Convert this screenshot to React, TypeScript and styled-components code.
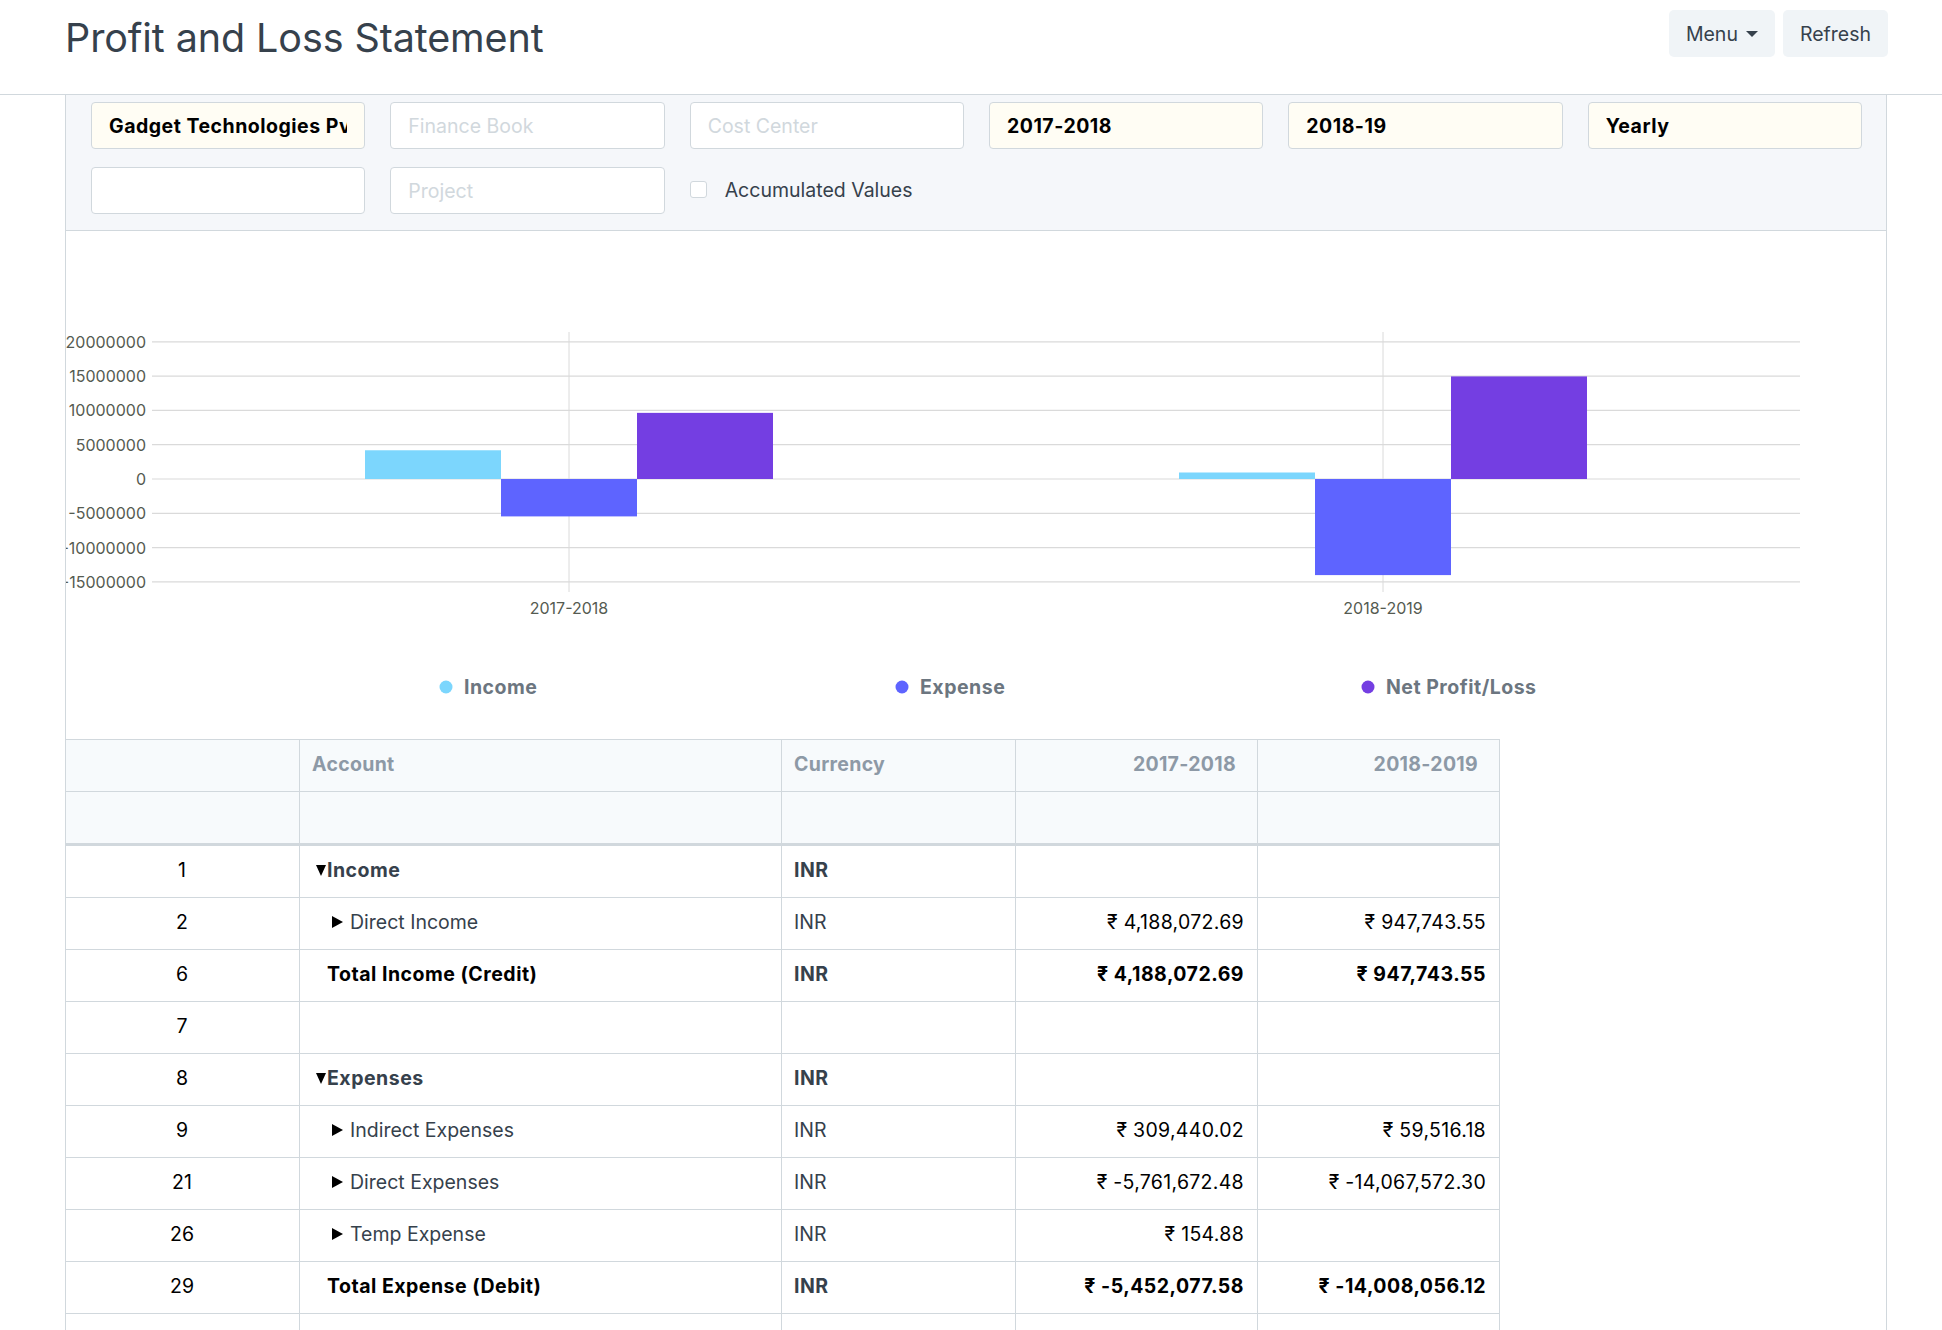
import React from 'react';
import styled, { createGlobalStyle } from 'styled-components';

const GlobalStyle = createGlobalStyle`
  * { box-sizing: border-box; }
  body {
    margin: 0;
    background: #fff;
    font-family: Inter, "Noto Sans", "DejaVu Sans", sans-serif;
    color: #36414c;
    font-size: 19.5px;
  }
`

const Header = styled.header`
  display: flex;
  justify-content: space-between;
  align-items: flex-start;
  height: 95px;
  padding: 0 54px 0 65px;
  border-bottom: 1px solid #d1d8dd;
`
const Title = styled.h1`
  margin: 15px 0 0;
  font-size: 39.5px;
  line-height: 47px;
  font-weight: 400;
  color: #36414c;
  letter-spacing: -0.1px;
`
const Actions = styled.div`
  display: flex;
  gap: 8px;
  margin-top: 10px;
`
const Button = styled.button`
  display: flex;
  align-items: center;
  height: 47px;
  padding: 0 17px;
  background: #f0f4f7;
  border: none;
  border-radius: 5px;
  font-family: inherit;
  font-size: 19.5px;
  color: #36414c;
`
const Caret = styled.span`
  margin-left: 8px;
  width: 0;
  height: 0;
  border-left: 6.5px solid transparent;
  border-right: 6.5px solid transparent;
  border-top: 6px solid #36414c;
`

const Page = styled.main`
  margin-left: 65px;
  width: 1822px;
  border-left: 1px solid #d1d8dd;
  border-right: 1px solid #d1d8dd;
`
const Filters = styled.section`
  display: grid;
  grid-template-columns: repeat(6, 1fr);
  column-gap: 25px;
  row-gap: 18px;
  padding: 7px 24px 16px 25px;
  background: #f5f7fa;
  border-bottom: 1px solid #d1d8dd;
`
const Field = styled.input<{ $filled?: boolean }>`
  height: 47px;
  width: 100%;
  padding: 0 17px;
  border: 1px solid #d1d8dd;
  border-radius: 4px;
  background: ${p => (p.$filled ? '#fffdf4' : '#fff')};
  font-family: inherit;
  font-size: 19.5px;
  font-weight: 700;
  letter-spacing: 0.5px;
  color: #000;
  outline: none;
  &::placeholder {
    color: #d1d8dd;
    font-weight: 400;
    letter-spacing: 0;
  }
`
const CheckRow = styled.label`
  display: flex;
  align-items: center;
  gap: 18px;
  padding-bottom: 2px;
  white-space: nowrap;
  color: #36414c;
`
const CheckBox = styled.span`
  width: 17px;
  height: 17px;
  border: 1px solid #d1d8dd;
  border-radius: 3px;
  background: #fff;
`

const ChartBox = styled.section`
  height: 508px;
  svg { display: block; }
`

const Table = styled.div`
  width: 1434px;
  border-top: 1px solid #d1d8dd;
`
const Row = styled.div<{ $head?: boolean; $split?: boolean }>`
  display: grid;
  grid-template-columns: 234px 482px 234px 242px 242px;
  height: ${p => (p.$split ? 54 : 52)}px;
  background: ${p => (p.$head ? '#f7fafc' : '#fff')};
  border-bottom: ${p => (p.$split ? 3 : 1)}px solid #d1d8dd;
`
const Cell = styled.div<{ $align?: 'left' | 'center' | 'right'; $bold?: boolean; $tone?: string; $num?: boolean }>`
  display: flex;
  align-items: center;
  justify-content: ${p => (p.$align === 'right' ? 'flex-end' : p.$align === 'center' ? 'center' : 'flex-start')};
  padding: 0 13px 3px 12px;
  border-right: 1px solid #d1d8dd;
  font-weight: ${p => (p.$bold ? 700 : 400)};
  letter-spacing: ${p => (p.$bold ? 0.5 : p.$num ? 0.3 : 0)}px;
  color: ${p => p.$tone || '#36414c'};
  white-space: nowrap;
  overflow: hidden;
`
const HeadCell = styled(Cell)`
  font-weight: 700;
  color: #8d99a6;
  padding-right: 21px;
  letter-spacing: 0.3px;
`
const Toggle = styled.span<{ $open?: boolean }>`
  display: inline-block;
  width: 0;
  height: 0;
  ${p =>
    p.$open
      ? `margin: 0 1px 0 4px;
         border-left: 5px solid transparent;
         border-right: 5px solid transparent;
         border-top: 11px solid #000;`
      : `margin: 0 7px 0 20px;
         border-top: 6.5px solid transparent;
         border-bottom: 6.5px solid transparent;
         border-left: 11px solid #000;`}
`
const Indent = styled.span`
  padding-left: 15px;
`

type Kind = 'group' | 'child' | 'total' | 'blank'
interface Line {
  idx: number
  account?: string
  kind: Kind
  a?: string
  b?: string
}

const lines: Line[] = [
  { idx: 1, account: 'Income', kind: 'group' },
  { idx: 2, account: 'Direct Income', kind: 'child', a: '₹ 4,188,072.69', b: '₹ 947,743.55' },
  { idx: 6, account: 'Total Income (Credit)', kind: 'total', a: '₹ 4,188,072.69', b: '₹ 947,743.55' },
  { idx: 7, kind: 'blank' },
  { idx: 8, account: 'Expenses', kind: 'group' },
  { idx: 9, account: 'Indirect Expenses', kind: 'child', a: '₹ 309,440.02', b: '₹ 59,516.18' },
  { idx: 21, account: 'Direct Expenses', kind: 'child', a: '₹ -5,761,672.48', b: '₹ -14,067,572.30' },
  { idx: 26, account: 'Temp Expense', kind: 'child', a: '₹ 154.88', b: '' },
  { idx: 29, account: 'Total Expense (Debit)', kind: 'total', a: '₹ -5,452,077.58', b: '₹ -14,008,056.12' },
  { idx: 30, kind: 'blank' },
  { idx: 31, account: 'Profit for the year', kind: 'total', a: '₹ 9,640,150.27', b: '₹ 14,955,799.67' },
]

const series = [
  { name: 'Income', color: '#7cd6fd', values: [4188072.69, 947743.55] },
  { name: 'Expense', color: '#5e64ff', values: [-5452077.58, -14008056.12] },
  { name: 'Net Profit/Loss', color: '#743ee2', values: [9640150.27, 14955799.67] },
]
const periods = ['2017-2018', '2018-2019']
// legend dot centres, in svg coordinates
const legendX = [380, 836, 1302]

function Chart() {
  const zeroY = 248
  const step = 34.3
  const perUnit = step / 5000000
  const ticks = [20000000, 15000000, 10000000, 5000000, 0, -5000000, -10000000, -15000000]
  const centers = [503, 1317]
  const barW = 136
  return (
    <svg width="1820" height="508">
      {ticks.map(t => {
        const y = zeroY - t * perUnit
        return (
          <g key={t}>
            <line x1="86" x2="1734" y1={y} y2={y} stroke="#dadada" strokeWidth="1.2" />
            <text x="80" y={y} textAnchor="end" dominantBaseline="central" fontSize="16" fill="#555b51">
              {t}
            </text>
          </g>
        )
      })}
      {centers.map((cx, i) => (
        <g key={cx}>
          <line x1={cx} x2={cx} y1="101" y2="361" stroke="#dadada" strokeWidth="1" />
          <text x={cx} y="377" textAnchor="middle" dominantBaseline="central" fontSize="16" fill="#555b51">
            {periods[i]}
          </text>
          {series.map((s, j) => {
            const v = s.values[i]
            const h = Math.abs(v) * perUnit
            const y = v >= 0 ? zeroY - h : zeroY
            return <rect key={s.name} x={cx - 1.5 * barW + j * barW} y={y} width={barW} height={h} fill={s.color} />
          })}
        </g>
      ))}
      {series.map((s, j) => (
        <g key={s.name}>
          <circle cx={legendX[j]} cy="456" r="6.5" fill={s.color} />
          <text
            x={legendX[j] + 18}
            y="456"
            dominantBaseline="central"
            fontSize="19.5"
            fontWeight="700"
            letterSpacing="0.5"
            fill="#6c7680"
          >
            {s.name}
          </text>
        </g>
      ))}
    </svg>
  )
}

function AccountCell({ line }: { line: Line }) {
  if (line.kind === 'group') {
    return (
      <Cell $bold>
        <Toggle $open />
        {line.account}
      </Cell>
    )
  }
  if (line.kind === 'child') {
    return (
      <Cell>
        <Toggle />
        {line.account}
      </Cell>
    )
  }
  if (line.kind === 'total') {
    return (
      <Cell $bold $tone="#000">
        <Indent>{line.account}</Indent>
      </Cell>
    )
  }
  return <Cell />
}

function App() {
  return (
    <>
      <GlobalStyle />
      <Header>
        <Title>Profit and Loss Statement</Title>
        <Actions>
          <Button>
            Menu
            <Caret />
          </Button>
          <Button>Refresh</Button>
        </Actions>
      </Header>
      <Page>
        <Filters>
          <Field $filled readOnly value="Gadget Technologies Pvt. Ltd." />
          <Field readOnly placeholder="Finance Book" />
          <Field readOnly placeholder="Cost Center" />
          <Field $filled readOnly value="2017-2018" />
          <Field $filled readOnly value="2018-19" />
          <Field $filled readOnly value="Yearly" />
          <Field readOnly />
          <Field readOnly placeholder="Project" />
          <CheckRow>
            <CheckBox />
            Accumulated Values
          </CheckRow>
        </Filters>
        <ChartBox>
          <Chart />
        </ChartBox>
        <Table>
          <Row $head>
            <HeadCell />
            <HeadCell>Account</HeadCell>
            <HeadCell>Currency</HeadCell>
            <HeadCell $align="right">2017-2018</HeadCell>
            <HeadCell $align="right">2018-2019</HeadCell>
          </Row>
          <Row $head $split>
            <Cell />
            <Cell />
            <Cell />
            <Cell />
            <Cell />
          </Row>
          {lines.map(line => {
            const strong = line.kind === 'group' || line.kind === 'total'
            return (
              <Row key={line.idx}>
                <Cell $align="center" $tone="#000">{line.idx}</Cell>
                <AccountCell line={line} />
                <Cell $bold={strong}>{line.kind === 'blank' ? '' : 'INR'}</Cell>
                <Cell $align="right" $bold={line.kind === 'total'} $num $tone="#000">{line.a}</Cell>
                <Cell $align="right" $bold={line.kind === 'total'} $num $tone="#000">{line.b}</Cell>
              </Row>
            )
          })}
        </Table>
      </Page>
    </>
  )
}

export default App
